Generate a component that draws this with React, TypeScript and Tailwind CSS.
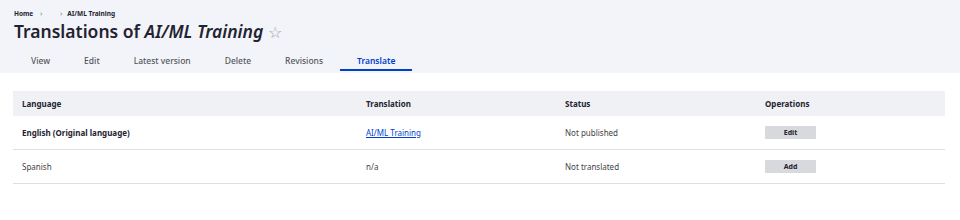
import React from 'react';

const tabs = ['View', 'Edit', 'Latest version', 'Delete', 'Revisions', 'Translate'];

const rows = [
  { lang: 'English (Original language)', bold: true, translation: 'AI/ML Training', link: true, status: 'Not published', op: 'Edit' },
  { lang: 'Spanish', bold: false, translation: 'n/a', link: false, status: 'Not translated', op: 'Add' },
];

export default function App() {
  return (
    <div className="w-[960px] h-[220px] bg-white text-[#222330]" style={{ fontFamily: '"Noto Sans", "Open Sans", sans-serif' }}>
      {/* Header */}
      <div className="bg-[#f3f4f9] h-[73px] pl-[14px] pt-[9px]">
        <div className="flex items-center text-[6.5px] font-bold h-[10px] text-[#222330]">
          <span>Home</span>
          <span className="ml-[7px] font-normal text-[#555]">›</span>
          <span className="ml-[18px] font-normal text-[#555]">›</span>
          <span className="ml-[5px]">AI/ML Training</span>
        </div>
        <div className="flex items-center h-[26px]">
          <h1 className="text-[17.5px] leading-none font-semibold">
            Translations of <em className="font-semibold">AI/ML Training</em>
          </h1>
          <span className="ml-[5px] text-[16px] leading-none text-[#a0a0a8]">☆</span>
        </div>
        <div className="flex mt-[6px] text-[8.5px] font-medium text-[#55565b]">
          {tabs.map((t) => (
            <div
              key={t}
              className={`relative px-[17px] h-[20px] flex items-center ${t === 'Translate' ? 'text-[#003ecc] font-semibold' : ''}`}
            >
              <span>{t}</span>
              {t === 'Translate' && (
                <span className="absolute left-0 right-0 bottom-[0px] h-[2px] bg-[#003ecc]" />
              )}
            </div>
          ))}
        </div>
      </div>

      {/* Table */}
      <div className="mx-[13px] mt-[18px] w-[932px]">
        <div className="grid grid-cols-[353px_199px_200px_180px] bg-[#f0f1f4] h-[25px] items-center text-[8px] font-bold text-[#222330]">
          <div className="pl-[9px]">Language</div>
          <div>Translation</div>
          <div>Status</div>
          <div>Operations</div>
        </div>
        {rows.map((r) => (
          <div
            key={r.lang}
            className="grid grid-cols-[353px_199px_200px_180px] h-[34px] items-center text-[8px] border-b border-[#dedfe4]"
          >
            <div className={`pl-[9px] ${r.bold ? 'font-bold' : 'text-[#444]'}`}>{r.lang}</div>
            <div>
              {r.link ? (
                <a href="#" className="text-[#003ecc] underline">{r.translation}</a>
              ) : (
                <span className="text-[#444]">{r.translation}</span>
              )}
            </div>
            <div className="text-[#444]">{r.status}</div>
            <div>
              <button className="w-[51px] h-[13px] bg-[#d8d9dc] text-[7px] font-bold text-[#222330] rounded-[1px] flex items-center justify-center leading-none">
                {r.op}
              </button>
            </div>
          </div>
        ))}
      </div>
    </div>
  );
}
